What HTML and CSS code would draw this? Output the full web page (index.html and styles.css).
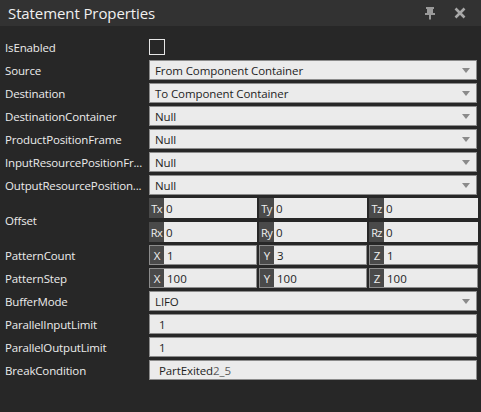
FILE: index.html
```html
<!DOCTYPE html>
<html>
<head>
<meta charset="utf-8">
<link rel="stylesheet" href="styles.css">
</head>
<body>
<div class="panel">
  <div class="titlebar">
    <span class="title">Statement Properties</span>
    <div class="tools">
      <svg class="pin" width="14" height="14" viewBox="0 0 14 14">
        <path d="M3 1h8v2H10v4h2v2H8v4.5H6V9H2V7h2V3H3z" fill="#9a9a9a"/>
      </svg>
      <svg class="close" width="14" height="14" viewBox="0 0 14 14">
        <path d="M2.5 2.5l9 9M11.5 2.5l-9 9" stroke="#a8a8a8" stroke-width="2.6" stroke-linecap="butt"/>
      </svg>
    </div>
  </div>
  <div class="props">
    <div class="row row-check">
      <div class="label">IsEnabled</div>
      <div class="value"><span class="checkbox"></span></div>
    </div>
    <div class="row">
      <div class="label">Source</div>
      <div class="value combo"><span>From Component Container</span><i class="arrow"></i></div>
    </div>
    <div class="row">
      <div class="label">Destination</div>
      <div class="value combo"><span>To Component Container</span><i class="arrow"></i></div>
    </div>
    <div class="row">
      <div class="label">DestinationContainer</div>
      <div class="value combo"><span>Null</span><i class="arrow"></i></div>
    </div>
    <div class="row">
      <div class="label">ProductPositionFrame</div>
      <div class="value combo"><span>Null</span><i class="arrow"></i></div>
    </div>
    <div class="row">
      <div class="label">InputResourcePositionFr...</div>
      <div class="value combo"><span>Null</span><i class="arrow"></i></div>
    </div>
    <div class="row">
      <div class="label">OutputResourcePosition...</div>
      <div class="value combo"><span>Null</span><i class="arrow"></i></div>
    </div>
    <div class="row row-offset">
      <div class="label">Offset</div>
      <div class="vecgroup">
        <div class="vec">
          <div class="cell flat"><span class="tag">Tx</span><span class="num">0</span></div>
          <div class="cell flat"><span class="tag">Ty</span><span class="num">0</span></div>
          <div class="cell flat"><span class="tag">Tz</span><span class="num">0</span></div>
        </div>
        <div class="vec">
          <div class="cell flat"><span class="tag">Rx</span><span class="num">0</span></div>
          <div class="cell flat"><span class="tag">Ry</span><span class="num">0</span></div>
          <div class="cell flat"><span class="tag">Rz</span><span class="num">0</span></div>
        </div>
      </div>
    </div>
    <div class="row">
      <div class="label">PatternCount</div>
      <div class="vec">
        <div class="cell framed"><span class="tag wide">X</span><span class="num">1</span></div>
        <div class="cell framed"><span class="tag wide">Y</span><span class="num">3</span></div>
        <div class="cell framed"><span class="tag wide">Z</span><span class="num">1</span></div>
      </div>
    </div>
    <div class="row">
      <div class="label">PatternStep</div>
      <div class="vec">
        <div class="cell framed"><span class="tag wide">X</span><span class="num">100</span></div>
        <div class="cell framed"><span class="tag wide">Y</span><span class="num">100</span></div>
        <div class="cell framed"><span class="tag wide">Z</span><span class="num">100</span></div>
      </div>
    </div>
    <div class="row">
      <div class="label">BufferMode</div>
      <div class="value combo"><span>LIFO</span><i class="arrow"></i></div>
    </div>
    <div class="row">
      <div class="label">ParallelInputLimit</div>
      <div class="value text"><span>1</span></div>
    </div>
    <div class="row">
      <div class="label">ParallelOutputLimit</div>
      <div class="value text"><span>1</span></div>
    </div>
    <div class="row">
      <div class="label">BreakCondition</div>
      <div class="value text"><span>PartExited<span class="dim">2_5</span></span></div>
    </div>
  </div>
</div>
</body>
</html>
```
FILE: styles.css
```css
* { box-sizing: border-box; }
html, body { margin: 0; padding: 0; }
body {
  background: #272727;
  font-family: "Open Sans", "Noto Sans", sans-serif;
}
.panel {
  width: 481px;
  height: 412px;
  background: #272727;
  overflow: hidden;
}
.titlebar {
  height: 26px;
  background: #323232;
  display: flex;
  align-items: center;
  justify-content: space-between;
  padding: 0 14px 0 8px;
}
.title {
  color: #f0f0f0;
  font-size: 15px;
  letter-spacing: -0.1px;
}
.tools {
  display: flex;
  align-items: center;
  gap: 16px;
}
.pin, .close { display: block; }
.props {
  padding-top: 11px;
  padding-right: 4px;
}
.row {
  display: grid;
  grid-template-columns: 149px 328px;
  align-items: center;
  margin-bottom: 3px;
}
.label {
  padding-left: 5px;
  color: #ececec;
  font-size: 11.5px;
  white-space: nowrap;
  overflow: hidden;
  letter-spacing: -0.15px;
}
.value {
  height: 20px;
  display: flex;
  align-items: center;
  font-size: 11.5px;
  color: #1e1e1e;
  letter-spacing: -0.1px;
}
.row-check .value { height: 20px; }
.checkbox {
  display: block;
  width: 16px;
  height: 16px;
  border: 1px solid #e6e6e6;
  margin-left: 0;
}
.combo {
  background: #ebebeb;
  border: 1px solid #8c8c8c;
  padding-left: 5px;
  justify-content: space-between;
}
.arrow {
  display: block;
  width: 0;
  height: 0;
  border-left: 4px solid transparent;
  border-right: 4px solid transparent;
  border-top: 5px solid #8a8a8a;
  margin-right: 6px;
}
.text {
  background: #ebebeb;
  border: 1px solid #8c8c8c;
  padding-left: 9px;
}
.dim { color: #5c5c5c; }
.row-offset { margin-top: 2px; }
.vecgroup {
  display: flex;
  flex-direction: column;
  gap: 4px;
}
.vec {
  display: grid;
  grid-template-columns: 108px 108px 109px;
  gap: 2px;
}
.cell {
  height: 20px;
  display: flex;
  align-items: stretch;
  background: #ebebeb;
  font-size: 11.5px;
}
.cell.framed {
  border: 1px solid #8c8c8c;
}
.tag {
  background: #4a4a4a;
  color: #f0f0f0;
  width: 15px;
  display: flex;
  align-items: center;
  justify-content: center;
  letter-spacing: -0.6px;
  font-size: 11px;
}
.tag.wide {
  width: 14px;
  font-size: 11.5px;
  letter-spacing: 0;
}
.num {
  display: flex;
  align-items: center;
  padding-left: 2px;
  color: #1e1e1e;
}
.framed .num { padding-left: 3px; }
```
